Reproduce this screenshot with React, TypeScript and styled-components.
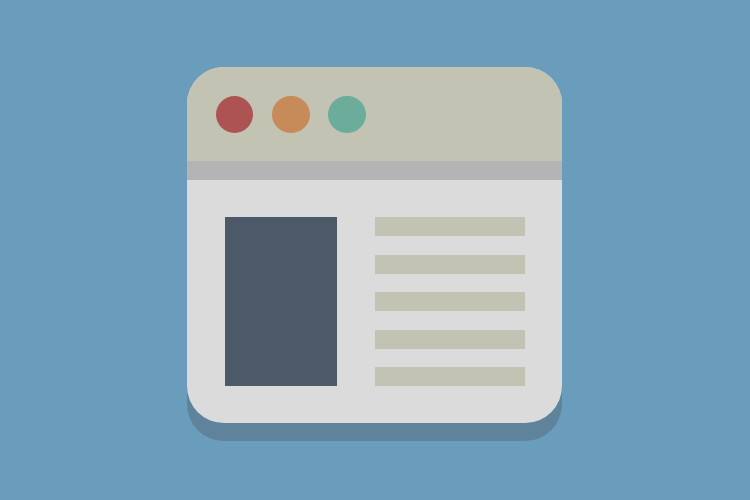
import React from "react";
import styled, { createGlobalStyle } from "styled-components";

const Global = createGlobalStyle`
  html, body { margin: 0; padding: 0; background: #6a9cbb; }
  #root { width: 750px; height: 500px; overflow: hidden; }
`;

const Stage = styled.main`
  width: 750px;
  height: 500px;
  padding: 67px 0 0 187px;
  box-sizing: border-box;
  display: flex;
  align-items: flex-start;
  background: #6a9cbb;
`;

const WindowShadow = styled.div`
  border-radius: 37px;
  box-shadow: 0 18px 0 #5e839b;
`;

const Window = styled.section`
  width: 375px;
  height: 356px;
  border-radius: 37px;
  overflow: hidden;
  display: flex;
  flex-direction: column;
  background: #dbdbdb;
`;

const TitleBar = styled.header`
  height: 94px;
  flex: none;
  box-sizing: border-box;
  padding: 28.5px 0 0 28.75px;
  display: flex;
  align-items: flex-start;
  gap: 18.75px;
  background: #c3c3b4;
`;

const Dot = styled.span<{ $color: string }>`
  width: 37.5px;
  height: 37.5px;
  border-radius: 50%;
  background: ${(p) => p.$color};
`;

const Strip = styled.div`
  height: 19px;
  flex: none;
  background: #b4b4b5;
`;

const Content = styled.div`
  flex: 1;
  display: flex;
  gap: 38px;
  padding: 37px 37px 37px 38px;
  box-sizing: border-box;
`;

const Sidebar = styled.div`
  width: 112px;
  height: 169px;
  flex: none;
  background: #4c5969;
`;

const Lines = styled.div`
  width: 150px;
  height: 169px;
  flex: none;
  display: flex;
  flex-direction: column;
  justify-content: space-between;
`;

const Line = styled.div`
  height: 19px;
  background: #c3c3b4;
`;

export default function App() {
  return (
    <>
      <Global />
      <Stage>
        <WindowShadow>
          <Window>
            <TitleBar>
              <Dot $color="#ae5353" />
              <Dot $color="#c68b58" />
              <Dot $color="#6bac9b" />
            </TitleBar>
            <Strip />
            <Content>
              <Sidebar />
              <Lines>
                <Line />
                <Line />
                <Line />
                <Line />
                <Line />
              </Lines>
            </Content>
          </Window>
        </WindowShadow>
      </Stage>
    </>
  );
}
